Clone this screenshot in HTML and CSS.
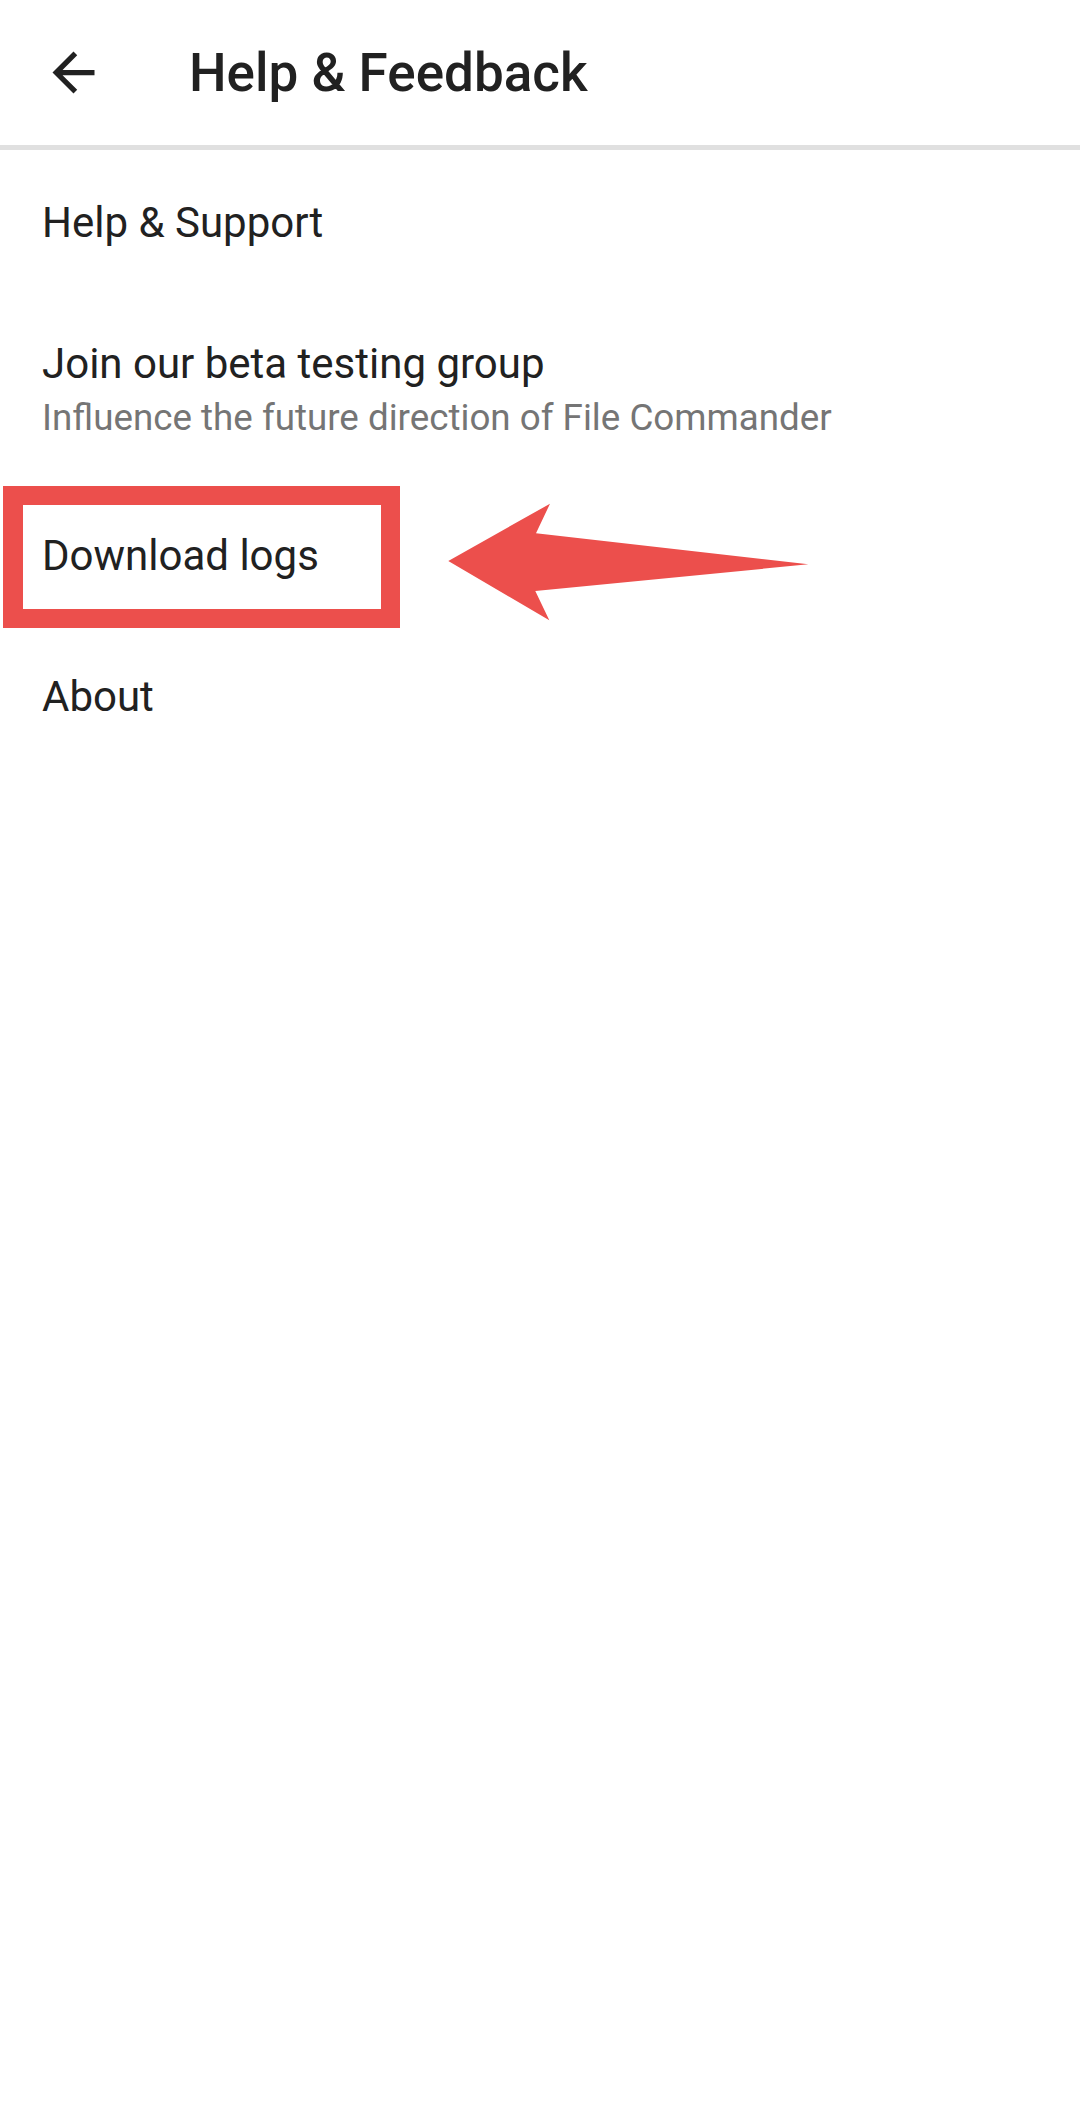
FILE: index.html
```html
<!DOCTYPE html>
<html lang="en">
<head>
<meta charset="utf-8">
<title>Help &amp; Feedback</title>
<link rel="stylesheet" href="styles.css">
</head>
<body>
<header class="toolbar">
  <div class="nav-icon">
    <svg viewBox="0 0 24 24" width="63" height="63"><path d="M20 11H7.83l5.59-5.59L12 4l-8 8 8 8 1.41-1.41L7.83 13H20v-2z" fill="#212121"/></svg>
  </div>
  <h1 class="title">Help &amp; Feedback</h1>
</header>
<div class="divider"></div>
<main class="list">
  <div class="row"><div class="row-title">Help &amp; Support</div></div>
  <div class="row">
    <div class="row-title">Join our beta testing group</div>
    <div class="row-sub">Influence the future direction of File Commander</div>
  </div>
  <div class="row row-marked">
    <div class="row-title">Download logs</div>
    <div class="highlight"></div>
    <svg class="pointer" viewBox="0 0 380 135" width="380" height="135"><path d="M8.3 65 L110 7.7 L96 37.3 L368.3 68.3 L95.3 95 L109.3 124.3 Z" fill="#ec4f4c"/></svg>
  </div>
  <div class="row"><div class="row-title">About</div></div>
</main>
</body>
</html>
```
FILE: styles.css
```css
html, body {
  margin: 0;
  padding: 0;
  background: #ffffff;
}
body {
  width: 1080px;
  height: 2120px;
  font-family: Roboto, "Noto Sans", sans-serif;
  color: #212121;
  overflow: hidden;
}
.toolbar {
  height: 145px;
  display: flex;
  align-items: center;
  padding-left: 42px;
  box-sizing: border-box;
}
.nav-icon {
  width: 63px;
  height: 63px;
  display: flex;
}
.title {
  margin: 0 0 0 84px;
  font-size: 53px;
  font-weight: 500;
  line-height: 62px;
  color: #212121;
}
.divider {
  height: 5px;
  background: #e0e0e0;
}
.list {
  padding-top: 2px;
}
.row {
  position: relative;
  padding: 46px 42px;
}
.row-title {
  font-size: 42px;
  line-height: 49px;
  color: #212121;
}
.row-sub {
  margin-top: 8px;
  font-size: 36.75px;
  line-height: 43px;
  color: #757575;
}
.row-marked .highlight {
  position: absolute;
  left: 3px;
  top: 1px;
  width: 397px;
  height: 142px;
  box-sizing: border-box;
  border: 19px solid #ec4f4c;
  border-left-width: 20px;
}
.pointer {
  position: absolute;
  left: 440px;
  top: 11px;
}
```
